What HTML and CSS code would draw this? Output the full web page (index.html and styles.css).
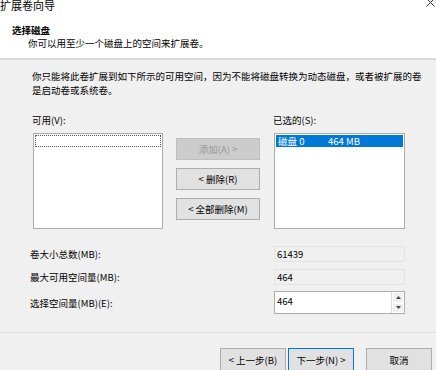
FILE: index.html
```html
<!DOCTYPE html>
<html lang="zh-CN">
<head>
  <meta charset="UTF-8">
  <title>扩展卷向导</title>
  <link rel="stylesheet" href="styles.css">
</head>
<body>
  <div class="wizard">
    <div class="titlebar">
      <span class="title">扩展卷向导</span>
      <svg class="close" width="9" height="9" viewBox="0 0 9 9">
        <path d="M0.5 0.5 L8.5 8.5 M8.5 0.5 L0.5 8.5" stroke="#333" stroke-width="1" fill="none"/>
      </svg>
    </div>

    <div class="header">
      <h1>选择磁盘</h1>
      <p>你可以用至少一个磁盘上的空间来扩展卷。</p>
    </div>

    <div class="content">
      <p class="note">你只能将此卷扩展到如下所示的可用空间，因为不能将磁盘转换为动态磁盘，或者被扩展的卷<br>是启动卷或系统卷。</p>

      <div class="picker">
        <div class="col left">
          <label>可用(V):</label>
          <div class="listbox">
            <div class="row focus"></div>
          </div>
        </div>
        <div class="actions">
          <button class="btn" disabled>添加(A) &gt;</button>
          <button class="btn">&lt; 删除(R)</button>
          <button class="btn">&lt; 全部删除(M)</button>
        </div>
        <div class="col right">
          <label>已选的(S):</label>
          <div class="listbox">
            <div class="row selected"><span class="disk">磁盘 0</span><span>464 MB</span></div>
          </div>
        </div>
      </div>

      <div class="fields">
        <div class="field">
          <span class="flabel">卷大小总数(MB):</span>
          <div class="readonly">61439</div>
        </div>
        <div class="field">
          <span class="flabel">最大可用空间量(MB):</span>
          <div class="readonly">464</div>
        </div>
        <div class="field">
          <span class="flabel">选择空间量(MB)(E):</span>
          <div class="spin">
            <div class="spin-value">464</div>
            <div class="spin-buttons">
              <div class="arrow"><svg width="5" height="3" viewBox="0 0 5 3"><path d="M2.5 0 L5 3 L0 3 Z" fill="#444"/></svg></div>
              <div class="arrow"><svg width="5" height="3" viewBox="0 0 5 3"><path d="M0 0 L5 0 L2.5 3 Z" fill="#444"/></svg></div>
            </div>
          </div>
        </div>
      </div>
    </div>

    <div class="footer">
      <button class="btn nav">&lt; 上一步(B)</button>
      <button class="btn nav default">下一步(N) &gt;</button>
      <button class="btn nav cancel">取消</button>
    </div>
  </div>
</body>
</html>
```

FILE: styles.css
```css
body {
  margin: 0;
  background: #f0f0f0;
  font-family: "Noto Sans CJK SC", "Microsoft YaHei", sans-serif;
  font-size: 9.5px;
  color: #000;
  overflow: hidden;
}

.wizard {
  width: 436px;
  height: 370px;
}

.titlebar {
  height: 16px;
  background: #fff;
  display: flex;
  justify-content: space-between;
  align-items: flex-start;
}

.title {
  font-size: 11px;
  line-height: 11px;
  margin-left: 0;
}

.close {
  margin-top: -2px;
  margin-right: 1px;
}

.header {
  background: #fff;
  height: 44px;
  padding: 8px 0 0 12px;
  box-sizing: border-box;
  border-bottom: 2px solid #dadada;
}

.header h1 {
  margin: 0;
  font-size: 9.5px;
  font-weight: bold;
  line-height: 13px;
}

.header p {
  margin: 0 0 0 16px;
  line-height: 13px;
}

.content {
  padding: 9px 0 0 32px;
  height: 273px;
  box-sizing: border-box;
  border-bottom: 1px solid #dfdfdf;
}

.note {
  margin: 0;
  line-height: 14px;
}

.picker {
  display: flex;
  margin-top: 16px;
  padding-left: 1px;
}

.col label {
  display: block;
  line-height: 14px;
  margin: 0 0 6px -1px;
}

.left .listbox {
  width: 130px;
}

.right .listbox {
  width: 131px;
}

.listbox {
  height: 96px;
  box-sizing: border-box;
  background: #fff;
  border: 1px solid #acacac;
  padding: 1px;
}

.row {
  height: 12px;
  line-height: 12px;
}

.row.focus {
  border: 1px dotted #555;
  height: 10px;
}

.row.selected {
  background: #0078d7;
  color: #fff;
  padding-left: 2px;
  display: flex;
}

.disk {
  width: 50px;
}

.actions {
  display: flex;
  flex-direction: column;
  gap: 8px;
  margin: 25px 14px 0 13px;
}

.btn {
  font-family: inherit;
  font-size: 9.5px;
  background: #e1e1e1;
  border: 1px solid #adadad;
  color: #000;
  padding: 0;
  width: 84px;
  height: 22px;
}

.btn:disabled {
  background: #cccccc;
  border-color: #bfbfbf;
  color: #9a9a9a;
}

.fields {
  margin-top: 17px;
}

.field {
  display: flex;
  align-items: center;
  margin-bottom: 7px;
}

.field:nth-child(2) {
  margin-bottom: 6px;
}

.flabel {
  width: 242px;
  margin-left: -2px;
  padding-right: 2px;
}

.readonly {
  width: 131px;
  height: 16px;
  box-sizing: border-box;
  border: 1px solid #e3e3e3;
  background: #f0f0f0;
  padding-left: 2px;
  line-height: 14px;
}

.spin {
  display: flex;
  width: 131px;
  height: 23px;
  box-sizing: border-box;
  border: 1px solid #adadad;
  background: #fff;
}

.spin-value {
  flex: 1;
  padding: 2px 0 0 2px;
  line-height: 14px;
}

.spin-buttons {
  width: 12px;
  display: flex;
  flex-direction: column;
  border-left: 1px solid #dcdcdc;
}

.arrow {
  flex: 1;
  display: flex;
  align-items: center;
  justify-content: center;
  background: #f0f0f0;
  border: 1px solid #fff;
}

.footer {
  display: flex;
  justify-content: flex-end;
  padding: 15px 4px 0 0;
}

.btn.nav {
  width: 66px;
  height: 23px;
  margin-left: 2px;
}

.btn.default {
  border-color: #0078d7;
}

.btn.cancel {
  margin-left: 12px;
}
```
